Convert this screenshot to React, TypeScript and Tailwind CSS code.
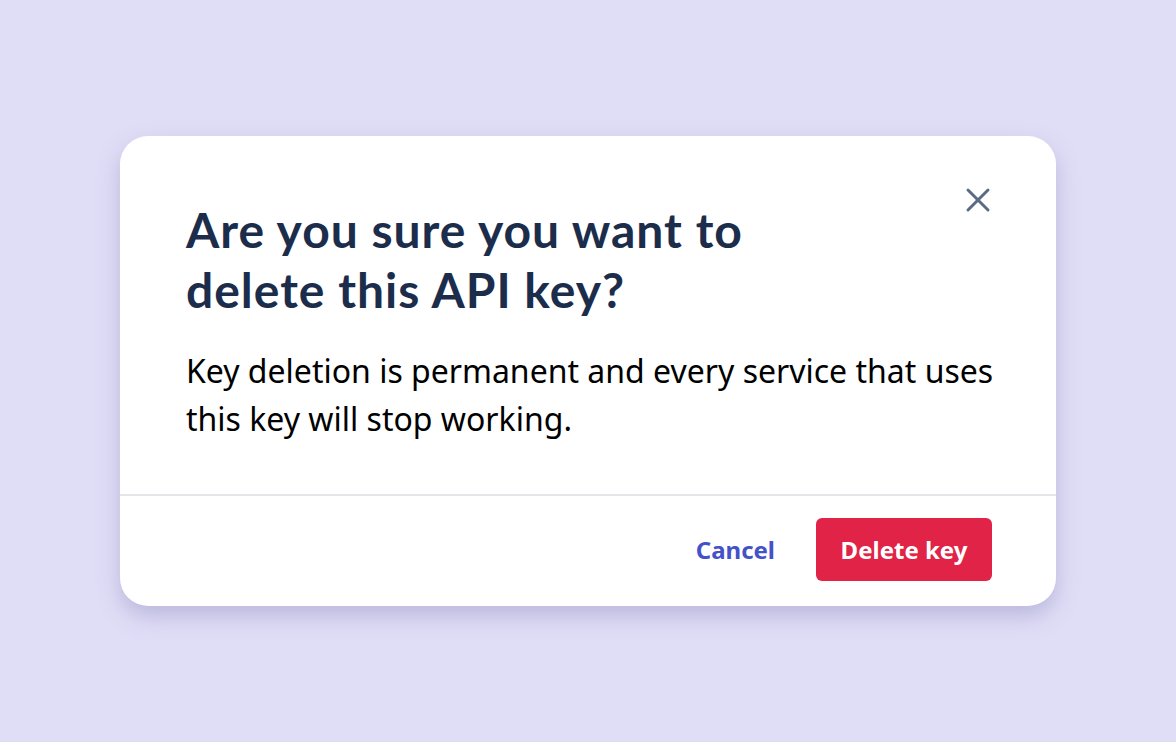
import React from "react";
import { X } from "lucide-react";

const App = () => {
  return (
    <main className="flex h-[742px] w-full items-center justify-center bg-[#e0def6]">
      <div className="w-[936px] rounded-[28px] bg-white shadow-[0_10px_22px_rgba(140,138,190,0.45)]">
        {/* Body */}
        <div className="relative pb-[51px] pl-[66px] pr-[50px] pt-[64px]">
          <button className="absolute right-[58px] top-[44px] text-[#5c6b84]">
            <X className="h-[40px] w-[40px]" strokeWidth={1.8} />
          </button>
          <h2 className="w-[620px] font-['Lato',sans-serif] text-[48px] font-bold leading-[60px] tracking-[1px] text-[#1c2d4c]">
            Are you sure you want to delete this API key?
          </h2>
          <p className="mt-[27px] font-['Noto_Sans',sans-serif] text-[32px] leading-[48px] text-black">
            Key deletion is permanent and every service that uses this key
            will stop working.
          </p>
        </div>

        {/* Footer */}
        <div className="flex items-center justify-end gap-[41px] border-t-2 border-[#e5e5ea] px-[64px] pb-[25px] pt-[22px]">
          <button className="font-['Noto_Sans',sans-serif] text-[24px] font-bold text-[#4352c8]">
            Cancel
          </button>
          <button className="h-[63px] w-[176px] rounded-[6px] bg-[#e12347] font-['Noto_Sans',sans-serif] text-[24px] font-bold text-white">
            Delete key
          </button>
        </div>
      </div>
    </main>
  );
};

export default App;
